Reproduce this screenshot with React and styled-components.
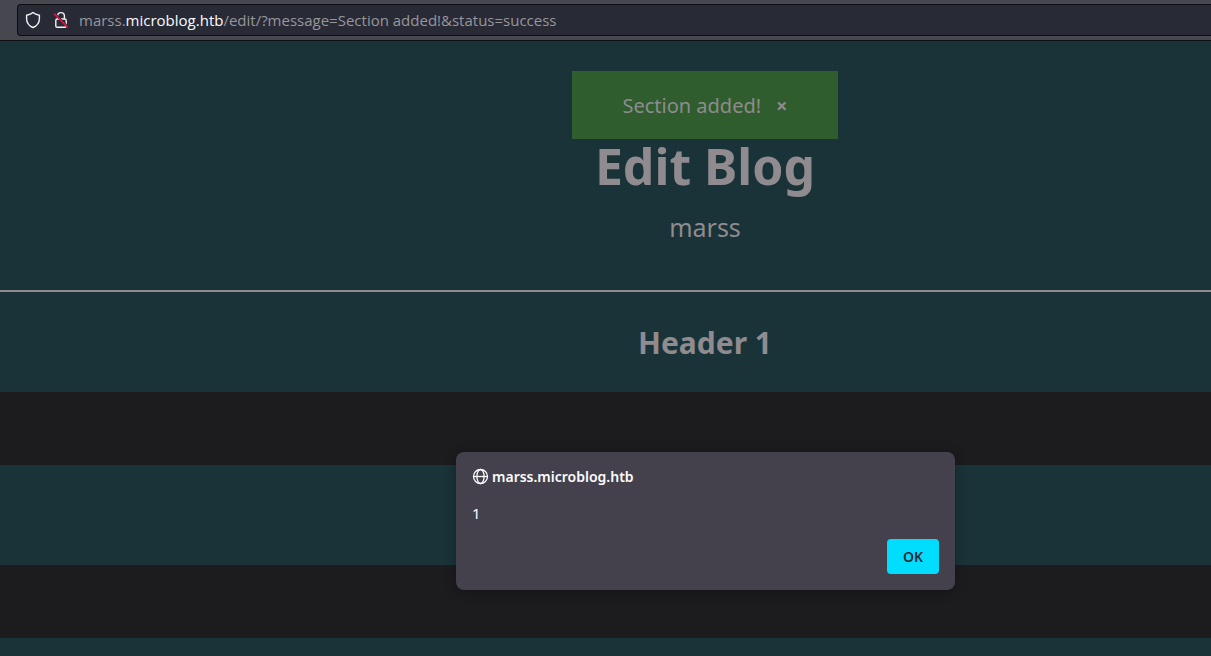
import React from "react";
import styled, { createGlobalStyle } from "styled-components";

const GlobalStyle = createGlobalStyle`
  *, *::before, *::after { box-sizing: border-box; }
  body {
    margin: 0;
    background: #1c1b1e;
    font-family: "Noto Sans", "Open Sans", sans-serif;
  }
`;

const OFFSET = "199px";

const Window = styled.div`
  position: relative;
  display: flex;
  flex-direction: column;
  min-height: 100vh;
  overflow: hidden;
`;

const Toolbar = styled.div`
  padding: 4px 0 4px 17px;
  background: #46474f;
  border-bottom: 1px solid #0f0f14;
`;

const AddressBar = styled.div`
  display: flex;
  align-items: center;
  height: 32px;
  padding-left: 7px;
  background: #282a36;
  border: 1px solid #0d0e12;
  border-right: 0;
  border-radius: 4px 0 0 4px;
`;

const IconButton = styled.button`
  display: flex;
  margin: 0 12px 0 0;
  padding: 0;
  border: 0;
  background: none;
  color: #f2f2f2;
`;

const Address = styled.div`
  margin-left: -2px;
  color: #97979c;
  font-family: "Open Sans", "Noto Sans", sans-serif;
  font-size: 15px;
  line-height: 20px;
  white-space: nowrap;
  outline: none;
`;

const Domain = styled.span`
  color: #fbfbfe;
`;

const Page = styled.main`
  display: flex;
  flex: 1;
  flex-direction: column;
  color: #8f8b8f;
`;

const PageHeader = styled.header`
  display: flex;
  flex-direction: column;
  align-items: center;
  padding: 30px 0 46px ${OFFSET};
  background: #1a3338;
  border-bottom: 2px solid #8f8b8f;
`;

const Notice = styled.div`
  display: flex;
  gap: 15px;
  padding: 21px 50px 19px;
  background: #2f5d2d;
  font-size: 20px;
  line-height: 28px;
`;

const DismissButton = styled.button`
  padding: 0;
  border: 0;
  background: none;
  color: inherit;
  font: inherit;
  font-weight: 700;
`;

const Title = styled.h1`
  margin: 0;
  font-size: 50px;
  line-height: 54px;
`;

const BlogName = styled.p`
  margin: 17px 0 0;
  font-size: 25px;
  line-height: 34px;
`;

const Band = styled.section`
  display: flex;
  flex: ${({ $last }) => ($last ? "1 0 18px" : "0 0 100px")};
  align-items: center;
  justify-content: center;
  margin-bottom: ${({ $last }) => ($last ? 0 : "73px")};
  padding: 2px 0 0 ${OFFSET};
  background: #1a3338;
`;

const SectionTitle = styled.h2`
  margin: 0;
  font-size: 30px;
  line-height: 40px;
`;

const Overlay = styled.div`
  position: absolute;
  inset: 0;
  display: flex;
  align-items: flex-start;
  justify-content: center;
  padding: 452px 0 0 200px;
`;

const Dialog = styled.div`
  width: 499px;
  padding: 16px;
  border-radius: 8px;
  background: #44414d;
  box-shadow: 0 2px 12px rgba(0, 0, 0, 0.3);
  color: #fbfbfe;
  font-size: 14px;
  line-height: 20px;
`;

const DialogTitle = styled.h3`
  display: flex;
  align-items: center;
  gap: 3px;
  height: 17px;
  margin: 0;
  font-size: 14px;
  font-weight: 600;
`;

const DialogMessage = styled.p`
  margin: 18px 0 16px;
  font-size: 15px;
`;

const DialogActions = styled.div`
  display: flex;
  justify-content: flex-end;
`;

const PrimaryButton = styled.button`
  height: 35px;
  padding: 0 16px;
  border: 0;
  border-radius: 4px;
  background: #00ddff;
  color: #2b2a33;
  font: inherit;
  font-weight: 600;
`;

const ShieldIcon = () => (
  <svg width="16" height="18" viewBox="0 0 16 18" fill="none" stroke="currentColor" strokeWidth="1.4" strokeLinejoin="round" aria-hidden="true">
    <path d="M8 1.5 C9.6 3 12 3.8 14.4 4.2 V7.5 C14.4 12 12 14.9 8 16.5 C4 14.9 1.6 12 1.6 7.5 V4.2 C4 3.8 6.4 3 8 1.5 Z" />
  </svg>
);

const InsecureLockIcon = () => (
  <svg width="16" height="18" viewBox="0 0 16 18" fill="none" stroke="currentColor" strokeWidth="1.4" aria-hidden="true">
    <path d="M4.6 8 V5 A3.4 3.4 0 0 1 11.4 5 V8 M4.2 8 H11.8 Q13.2 8 13.2 9.4 V15 Q13.2 16.3 11.8 16.3 H4.2 Q2.8 16.3 2.8 15 V9.4 Q2.8 8 4.2 8 Z" />
    <path d="M2 2.6 L15.8 16.4" stroke="#282a36" strokeWidth="1.6" />
    <path d="M1 2.6 L14.8 16.4" stroke="#e2123f" strokeWidth="1.7" />
  </svg>
);

const GlobeIcon = () => (
  <svg width="17" height="17" viewBox="0 0 17 17" fill="none" stroke="currentColor" strokeWidth="1.3" aria-hidden="true">
    <circle cx="8.5" cy="8.5" r="7" />
    <ellipse cx="8.5" cy="8.5" rx="3.6" ry="7" />
    <path d="M1.5 8.5 H15.5" />
  </svg>
);

export default function App() {
  return (
    <>
      <GlobalStyle />
      <Window>
        <Toolbar>
          <AddressBar>
            <IconButton aria-label="Tracking protection"><ShieldIcon /></IconButton>
            <IconButton aria-label="Connection not secure"><InsecureLockIcon /></IconButton>
            <Address role="textbox" aria-label="Address" contentEditable suppressContentEditableWarning spellCheck={false}>
              marss.<Domain>microblog.htb</Domain>/edit/?message=Section added!&amp;status=success
            </Address>
          </AddressBar>
        </Toolbar>
        <Page>
          <PageHeader>
            <Notice role="status">
              <span>Section added!</span>
              <DismissButton aria-label="Dismiss">×</DismissButton>
            </Notice>
            <Title>Edit Blog</Title>
            <BlogName>marss</BlogName>
          </PageHeader>
          <Band>
            <SectionTitle>Header 1</SectionTitle>
          </Band>
          <Band />
          <Band $last />
        </Page>
        <Overlay>
          <Dialog role="alertdialog" aria-labelledby="dialog-title" aria-describedby="dialog-message">
            <DialogTitle id="dialog-title">
              <GlobeIcon />
              <span>marss.microblog.htb</span>
            </DialogTitle>
            <DialogMessage id="dialog-message">1</DialogMessage>
            <DialogActions>
              <PrimaryButton>OK</PrimaryButton>
            </DialogActions>
          </Dialog>
        </Overlay>
      </Window>
    </>
  );
}
